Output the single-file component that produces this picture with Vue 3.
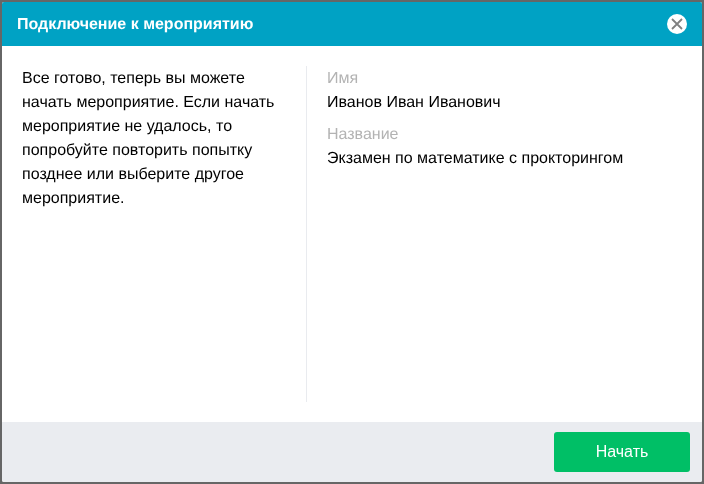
<script setup>
const message = 'Все готово, теперь вы можете начать мероприятие. Если начать мероприятие не удалось, то попробуйте повторить попытку позднее или выберите другое мероприятие.'
</script>

<template>
  <div class="page">
    <section class="dialog">
      <header class="head">
        <h1 class="title">Подключение к мероприятию</h1>
        <button class="close" type="button" aria-label="Закрыть">
          <svg width="12" height="12" viewBox="0 0 12 12">
            <path d="M1 1 11 11M11 1 1 11" stroke="#808080" stroke-width="1.8" fill="none" />
          </svg>
        </button>
      </header>
      <main class="body">
        <p class="message">{{ message }}</p>
        <div class="info">
          <div class="label">Имя</div>
          <div class="value">Иванов Иван Иванович</div>
          <div class="label second">Название</div>
          <div class="value">Экзамен по математике с прокторингом</div>
        </div>
      </main>
      <footer class="foot">
        <button class="start" type="button">Начать</button>
      </footer>
    </section>
  </div>
</template>

<style>
html, body { margin: 0; background: #666; }
</style>

<style scoped>
.page {
  width: 704px;
  height: 484px;
  padding: 2px;
  box-sizing: border-box;
  background: #666;
  font-family: "Liberation Sans", Arial, sans-serif;
  text-rendering: geometricPrecision;
}
.dialog {
  width: 700px;
  height: 480px;
  display: flex;
  flex-direction: column;
  background: #fff;
  border-radius: 2px;
  overflow: hidden;
  will-change: transform;
}
.head {
  height: 44px;
  flex: none;
  display: flex;
  align-items: center;
  justify-content: space-between;
  padding: 0 15px;
  background: #00a2c4;
}
.title {
  margin: 0;
  padding-top: 2px;
  font-size: 16px;
  font-weight: 700;
  line-height: 24px;
  color: #fff;
}
.close {
  width: 20px;
  height: 20px;
  padding: 0;
  border: 0;
  border-radius: 50%;
  background: #fff;
  display: flex;
  align-items: center;
  justify-content: center;
}
.body {
  flex: 1;
  display: flex;
  padding: 20px;
  min-height: 0;
}
.message {
  width: 285px;
  box-sizing: border-box;
  margin: 0;
  padding: 1px 20px 0 0;
  border-right: 1px solid #e9ebef;
  font-size: 16px;
  line-height: 24px;
  color: #000;
}
.info {
  padding: 1px 0 0 20px;
  font-size: 16px;
  line-height: 24px;
}
.label { color: #b3b3b3; }
.label.second { margin-top: 8px; }
.value { color: #000; }
.foot {
  height: 60px;
  flex: none;
  display: flex;
  align-items: center;
  justify-content: flex-end;
  padding: 0 12px;
  background: #eaecf0;
}
.start {
  width: 136px;
  height: 40px;
  padding: 0;
  border: 0;
  border-radius: 3px;
  background: #00bf66;
  color: #fff;
  font-family: inherit;
  font-size: 16px;
}
</style>
